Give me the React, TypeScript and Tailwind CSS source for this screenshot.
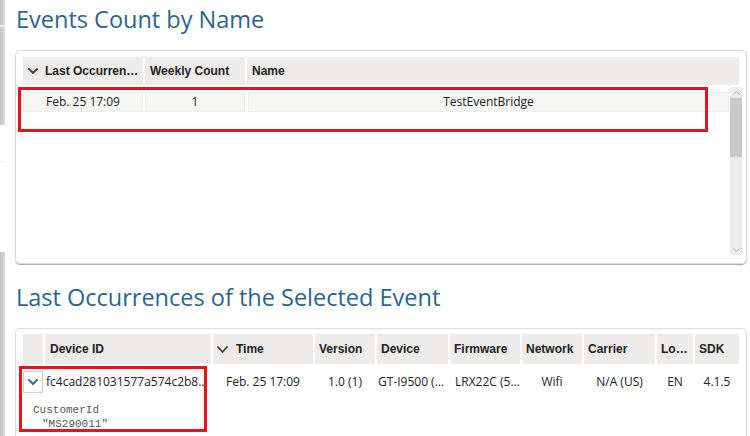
import React from "react";

function Chevron({ color = "#444", w = 10, h = 6, sw = 1.8 }: { color?: string; w?: number; h?: number; sw?: number }) {
  return (
    <svg width={w} height={h} viewBox={`0 0 ${w} ${h}`} className="shrink-0">
      <polyline points={`1,1 ${w / 2},${h - 1} ${w - 1},1`} fill="none" stroke={color} strokeWidth={sw} strokeLinecap="round" strokeLinejoin="round" />
    </svg>
  );
}

const hcell = "bg-[#edeceb] h-full flex items-center pl-[4px] font-['Liberation_Sans',Arial,sans-serif] font-bold text-[12px] text-[#222] whitespace-nowrap overflow-hidden shrink-0";
const dcell = "h-full flex items-center justify-center whitespace-nowrap overflow-hidden text-[12px] text-[#222] shrink-0";

export default function App() {
  return (
    <div className="w-[750px] h-[436px] overflow-hidden bg-white flex font-['Open_Sans',sans-serif]">
      {/* left strip */}
      <div className="w-[5px] shrink-0 flex flex-col">
        <div className="h-[25px] shrink-0 bg-linear-to-r from-[#c2c2c2] to-[#dedede]" />
        <div className="h-[2px] shrink-0 bg-[#ececec]" />
        <div className="h-[98px] shrink-0 bg-linear-to-r from-[#c2c2c2] to-[#dedede]" />
        <div className="h-[36px] shrink-0" />
        <div className="h-[1px] shrink-0 bg-[#f0f0f0]" />
        <div className="h-[90px] shrink-0" />
        <div className="flex-1 bg-linear-to-r from-[#c2c2c2] to-[#dedede]" />
      </div>

      <div className="ml-[10px] w-[732px] shrink-0 flex flex-col">
        <h1 className="h-[50px] shrink-0 pt-[2px] pl-[1px] text-[23.5px] leading-[34px] text-[#2c6592] font-normal">Events Count by Name</h1>

        {/* panel 1 */}
        <div className="relative h-[214px] shrink-0 rounded-[5px] border border-[#dcdcdc] shadow-[0_1px_1px_rgba(0,0,0,0.35)] pt-[6px] pl-[7px] pr-[4px] flex flex-col">
          <div className="flex gap-[2px] h-[28px] shrink-0 mr-[3px]">
            <div className={hcell + " w-[120px] pl-[5px]"}>
              <Chevron w={10} h={6} />
              <span className="ml-[7px]">Last Occurren…</span>
            </div>
            <div className={hcell + " w-[100px] pl-[5px]"}>Weekly Count</div>
            <div className={hcell + " flex-1 pl-[5px]"}>Name</div>
          </div>
          <div className="flex mt-[2px] h-[168px] shrink-0">
            <div className="flex-1 pt-[5px] mr-[1px]">
              <div className="flex gap-[2px] h-[20px]">
                <div className={dcell + " w-[120px] bg-[#f6f6f5] border border-[#eeeeee]"}>Feb. 25 17:09</div>
                <div className={dcell + " w-[100px] bg-[#f6f6f5] border border-[#eeeeee]"}>1</div>
                <div className={dcell + " flex-1 bg-[#f6f6f5] border border-[#eeeeee] ml-[1px]"}>TestEventBridge</div>
              </div>
            </div>
            <div className="w-[12px] bg-[#ececec] flex flex-col items-center">
              <div className="h-[11px] shrink-0 flex items-center justify-center">
                <svg width="7" height="4" viewBox="0 0 7 4"><polyline points="0.5,3.5 3.5,0.5 6.5,3.5" fill="none" stroke="#b0b0b0" strokeWidth="1" /></svg>
              </div>
              <div className="h-[59px] shrink-0 w-full bg-[#c9c9c9]" />
              <div className="flex-1" />
              <div className="h-[11px] shrink-0 flex items-center justify-center">
                <svg width="7" height="4" viewBox="0 0 7 4"><polyline points="0.5,0.5 3.5,3.5 6.5,0.5" fill="none" stroke="#b0b0b0" strokeWidth="1" /></svg>
              </div>
            </div>
          </div>
          <div className="absolute left-[2px] top-[36px] w-[690px] h-[45px] border-[3px] border-[#e8131d] pointer-events-none" />
        </div>

        <h2 className="mt-[16px] h-[34px] shrink-0 pl-[1px] text-[23.5px] leading-[34px] text-[#2c6592] font-normal">Last Occurrences of the Selected Event</h2>

        {/* panel 2 */}
        <div className="relative mt-[14px] h-[130px] shrink-0 rounded-[5px] border border-[#dcdcdc] pt-[5px] pl-[7px] pr-[6px] flex flex-col">
          <div className="flex gap-[2px] h-[30px] shrink-0">
            <div className={hcell + " w-[20px]"} />
            <div className={hcell + " w-[166px] pl-[5px]"}>Device ID</div>
            <div className={hcell + " w-[100px]"}>
              <Chevron w={11} h={7} />
              <span className="ml-[8px]">Time</span>
            </div>
            <div className={hcell + " w-[60px]"}>Version</div>
            <div className={hcell + " w-[71px]"}>Device</div>
            <div className={hcell + " w-[70px]"}>Firmware</div>
            <div className={hcell + " w-[60px]"}>Network</div>
            <div className={hcell + " w-[71px]"}>Carrier</div>
            <div className={hcell + " w-[36px]"}>Lo…</div>
            <div className={hcell + " w-[44px] pl-[3px]"}>SDK</div>
          </div>
          <div className="flex gap-[2px] h-[22px] shrink-0 mt-[7px]">
            <div className="w-[20px] h-full shrink-0 border border-[#cfcfcf] bg-white flex items-center justify-center">
              <Chevron color="#2f6ea8" w={10} h={6} sw={2} />
            </div>
            <div className={dcell + " w-[166px] justify-start pl-[1px]"}>fc4cad281031577a574c2b8…</div>
            <div className={dcell + " w-[100px]"}>Feb. 25 17:09</div>
            <div className={dcell + " w-[60px]"}>1.0 (1)</div>
            <div className={dcell + " w-[71px] justify-start pl-[1px]"}>GT-I9500 (…</div>
            <div className={dcell + " w-[70px] justify-start pl-[5px]"}>LRX22C (5…</div>
            <div className={dcell + " w-[60px]"}>Wifi</div>
            <div className={dcell + " w-[71px]"}>N/A (US)</div>
            <div className={dcell + " w-[36px]"}>EN</div>
            <div className={dcell + " w-[44px]"}>4.1.5</div>
          </div>
          <div className="mt-[10px] shrink-0 pl-[10px] font-['Liberation_Mono','Courier_New',monospace] text-[11px] leading-[14px] text-[#555] whitespace-pre">
            <div>CustomerId</div>
            <div className="pl-[9px]">"MS290011"</div>
          </div>
          <div className="absolute left-[3px] top-[37px] w-[188px] h-[66px] border-[3px] border-[#e8131d] pointer-events-none" />
        </div>
      </div>
    </div>
  );
}
